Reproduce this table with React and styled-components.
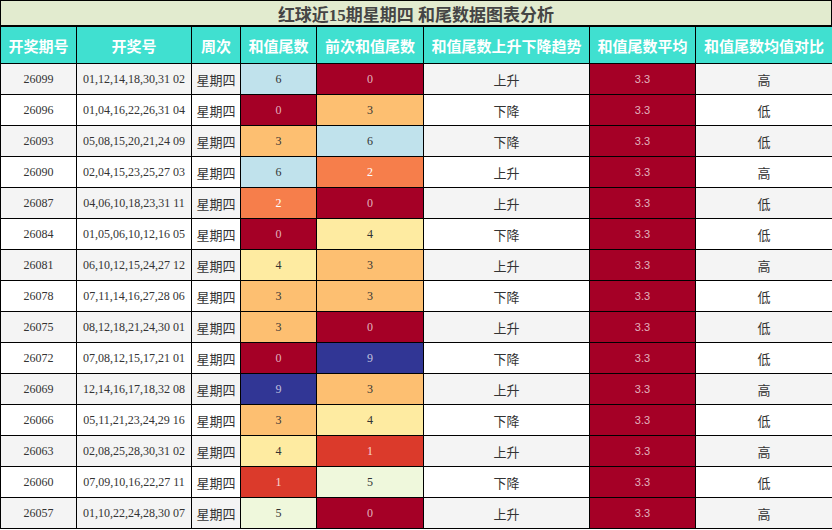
import React from 'react'
import styled, { createGlobalStyle } from 'styled-components'

const GlobalStyle = createGlobalStyle`
  html, body {
    margin: 0;
    padding: 0;
    background: #fff;
  }
  body {
    font-family: 'Liberation Serif', 'Noto Sans CJK SC', serif;
    color: #333;
  }
`

const tailColors = {
  0: { bg: '#a50026', fg: 'rgba(255,255,255,0.7)' },
  1: { bg: '#db3a2b', fg: 'rgba(255,255,255,0.8)' },
  2: { bg: '#f67e4b', fg: '#fff' },
  3: { bg: '#fdbf71', fg: '#333' },
  4: { bg: '#feeba1', fg: '#333' },
  5: { bg: '#eff8dc', fg: '#333' },
  6: { bg: '#c0e2ec', fg: '#333' },
  7: { bg: '#90c3dd', fg: '#333' },
  8: { bg: '#5f8fc4', fg: '#fff' },
  9: { bg: '#313695', fg: 'rgba(255,255,255,0.7)' }
}

const rows = [
  ['26099', '01,12,14,18,30,31 02', 6, 0, '上升', '高'],
  ['26096', '01,04,16,22,26,31 04', 0, 3, '下降', '低'],
  ['26093', '05,08,15,20,21,24 09', 3, 6, '下降', '低'],
  ['26090', '02,04,15,23,25,27 03', 6, 2, '上升', '高'],
  ['26087', '04,06,10,18,23,31 11', 2, 0, '上升', '低'],
  ['26084', '01,05,06,10,12,16 05', 0, 4, '下降', '低'],
  ['26081', '06,10,12,15,24,27 12', 4, 3, '上升', '高'],
  ['26078', '07,11,14,16,27,28 06', 3, 3, '下降', '低'],
  ['26075', '08,12,18,21,24,30 01', 3, 0, '上升', '低'],
  ['26072', '07,08,12,15,17,21 01', 0, 9, '下降', '低'],
  ['26069', '12,14,16,17,18,32 08', 9, 3, '上升', '高'],
  ['26066', '05,11,21,23,24,29 16', 3, 4, '下降', '低'],
  ['26063', '02,08,25,28,30,31 02', 4, 1, '上升', '高'],
  ['26060', '07,09,10,16,22,27 11', 1, 5, '下降', '低'],
  ['26057', '01,10,22,24,28,30 07', 5, 0, '上升', '高']
]

const headers = ['开奖期号', '开奖号', '周次', '和值尾数', '前次和值尾数', '和值尾数上升下降趋势', '和值尾数平均', '和值尾数均值对比']
const widths = [76, 115, 49, 76, 107, 166, 106, 137]

const Frame = styled.div`
  width: 832px;
  height: 530px;
  overflow: hidden;
`

const Title = styled.div`
  height: 24px;
  border: 1px solid #000;
  background: #e2ebcf;
  display: flex;
  align-items: center;
  justify-content: center;
  font-size: 17px;
  font-weight: bold;
  color: #454545;
`

const Table = styled.table`
  width: 832px;
  table-layout: fixed;
  border-collapse: collapse;
`

const HeadCell = styled.th`
  height: 36px;
  padding: 0;
  border: 1px solid #000;
  background: #40e0d0;
  color: #fff;
  font-family: 'Noto Sans CJK SC', sans-serif;
  font-size: 15px;
  font-weight: bold;
  text-align: center;
  white-space: nowrap;
`

const Row = styled.tr`
  background: ${p => (p.$odd ? '#f4f4f4' : '#fff')};
`

const Cell = styled.td`
  height: 30px;
  padding: 0;
  border: 1px solid #000;
  text-align: center;
  white-space: nowrap;
  font-size: ${p => (p.$cjk ? '13px' : '12px')};
  background: ${p => p.$bg || 'transparent'};
  color: ${p => p.$fg || '#333'};
`

const AvgCell = styled(Cell)`
  font-family: 'Liberation Sans', sans-serif;
  font-size: 11px;
  background: #a50026;
  color: rgba(255, 255, 255, 0.7);
`

const TailCell = ({ value }) => {
  const c = tailColors[value]
  return <Cell $bg={c.bg} $fg={c.fg}>{value}</Cell>
}

export default function App () {
  return (
    <Frame>
      <GlobalStyle/>
      <Title>红球近15期星期四 和尾数据图表分析</Title>
      <Table>
        <colgroup>
          {widths.map((w, i) => <col key={i} style={{ width: w }}/>)}
        </colgroup>
        <thead>
          <tr>
            {headers.map(h => <HeadCell key={h}>{h}</HeadCell>)}
          </tr>
        </thead>
        <tbody>
          {rows.map((r, i) => (
            <Row key={r[0]} $odd={i % 2 === 0}>
              <Cell>{r[0]}</Cell>
              <Cell>{r[1]}</Cell>
              <Cell $cjk>星期四</Cell>
              <TailCell value={r[2]}/>
              <TailCell value={r[3]}/>
              <Cell $cjk>{r[4]}</Cell>
              <AvgCell>3.3</AvgCell>
              <Cell $cjk>{r[5]}</Cell>
            </Row>
          ))}
        </tbody>
      </Table>
    </Frame>
  )
}
